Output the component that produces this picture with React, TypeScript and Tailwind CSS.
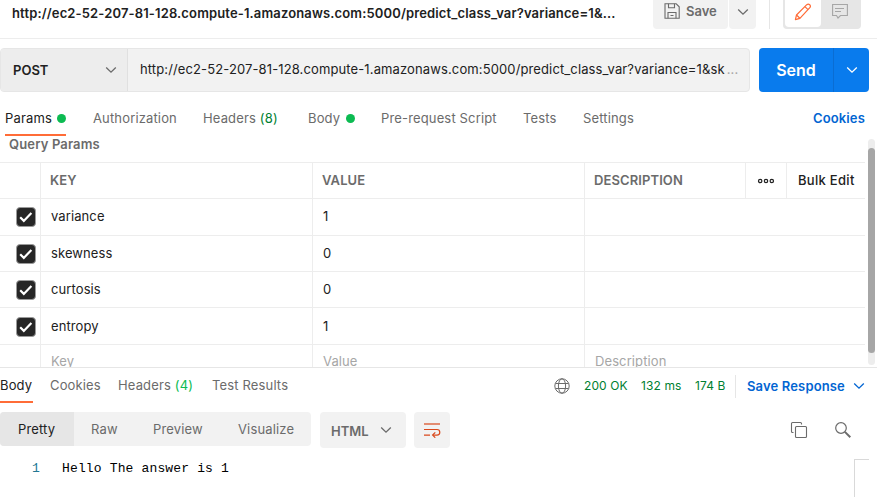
import React from 'react';

type IconProps = { className?: string };

const Chevron = ({ className = '' }: IconProps) => (
  <svg width="12" height="8" viewBox="0 0 12 8" fill="none" stroke="currentColor" strokeWidth="1.3" className={className}>
    <path d="M1.2 1.5 6 6.2l4.8-4.7" />
  </svg>
);

const SaveIcon = () => (
  <svg width="16" height="16" viewBox="0 0 16 16" fill="none" stroke="#6b6b6b" strokeWidth="1.1">
    <path d="M1 .8h11.2l3 3v11.400H1z" />
    <path d="M4.500.8v4h6v-4M4 15.200V9.500h8v5.700M6.500 12.500h3" />
  </svg>
);

const PencilIcon = () => (
  <svg width="18" height="18" viewBox="0 0 18 18" fill="none" stroke="#ff6c37" strokeWidth="1.2" strokeLinejoin="round">
    <path d="M1.4 16.600l1.100-4.600L12.800 1.700q1.500-1.200 2.900.1t.1 2.900L5.900 15.300z" />
    <path d="M10.900 3.600l3.100 3.100M2.500 12l3.400 3.300" />
  </svg>
);

const CommentIcon = () => (
  <svg width="16" height="16" viewBox="0 0 16 16" fill="none" stroke="#a6a6a6" strokeWidth="1.1">
    <path d="M.6 1.500h14.800v11H8.500L6 15l-1.500-2.500H.6z" />
    <path d="M3 5.500h9M3 8.500h6" />
  </svg>
);

const GlobeIcon = () => (
  <svg width="16" height="16" viewBox="0 0 16 16" fill="none" stroke="#6b6b6b" strokeWidth="1">
    <circle cx="8" cy="8" r="7.200" />
    <ellipse cx="8" cy="8" rx="3.600" ry="7.200" />
    <path d="M1.500 5.500h13M1.500 10.500h13" />
  </svg>
);

const WrapIcon = () => (
  <svg width="18" height="16" viewBox="0 0 18 16" fill="none" stroke="#d9481c" strokeWidth="1.2">
    <path d="M1 2h16" />
    <path d="M1 7.500h13a2.800 2.800 0 0 1 0 5.600H10M1 13.100h6" />
    <path d="M12.300 10.400 9.600 13.100l2.700 2.600" />
  </svg>
);

const CopyIcon = () => (
  <svg width="18" height="18" viewBox="0 0 18 18" fill="none" stroke="#6b6b6b" strokeWidth="1.1">
    <rect x="5.500" y="5.500" width="11" height="11" rx="1" />
    <path d="M3.500 11.500H2.500q-1 0-1-1v-8q0-1 1-1h8q1 0 1 1v1" />
  </svg>
);

const SearchIcon = () => (
  <svg width="18" height="18" viewBox="0 0 18 18" fill="none" stroke="#6b6b6b">
    <circle cx="7" cy="7" r="5.300" strokeWidth="1.200" />
    <path d="M10.900 10.900l5.400 5.400" strokeWidth="2" />
  </svg>
);

const Check = () => (
  <span className="flex size-[20px] items-center justify-center rounded-[4px] border border-[#9a9a9a] bg-[#262626]">
    <svg width="16" height="14" viewBox="0 0 16 14" fill="none" stroke="white" strokeWidth="2.200">
      <path d="M2.200 7.300l3.600 3.600 7.600-8" />
    </svg>
  </span>
);

const Dot = () => <span className="mt-[6px] block size-[9px] shrink-0 rounded-full bg-[#0cbb52]" />;

function Header() {
  return (
    <div className="flex h-[39px] items-start border-b border-[#ededed]">
      <div className="w-[653px] pl-[12px] pt-[3px] text-[13px] font-semibold leading-[20px] tracking-[0.14px] whitespace-nowrap text-[#212121]">
        http://ec2-52-207-81-128.compute-1.amazonaws.com:5000/predict_class_var?variance=1&amp;...
      </div>
      <div className="flex h-[29px] w-[75px] items-start gap-[6px] rounded-b-[4px] bg-[#f2f2f2] pl-[11px] pt-[3px]">
        <SaveIcon />
        <span className="text-[13px] font-semibold leading-[17px] text-[#6b6b6b]">Save</span>
      </div>
      <div className="ml-px flex h-[29px] w-[27px] justify-center rounded-b-[4px] bg-[#f2f2f2] pt-[8px] text-[#6b6b6b]">
        <Chevron />
      </div>
      <div className="ml-[13px] h-[29px] w-px bg-[#e6e6e6]" />
      <div className="ml-[13px] flex h-[29px] w-[78px] rounded-b-[4px] bg-[#e6e6e6] px-[2px] pb-[2px]">
        <div className="flex w-[36px] justify-center rounded-b-[4px] bg-white pt-[3px]"><PencilIcon /></div>
        <div className="flex w-[38px] justify-center pt-[3px]"><CommentIcon /></div>
      </div>
    </div>
  );
}

function RequestBar() {
  return (
    <div className="mt-[9px] flex h-[44px]">
      <div className="flex w-[750px] rounded-[4px] border border-[#e6e6e6] bg-[#f2f2f2]">
        <div className="flex w-[127px] shrink-0 items-center justify-between rounded-l-[3px] border-r border-[#e0e0e0] bg-[#ededed] pl-[12px] pr-[10px] text-[#6b6b6b]">
          <span className="pt-px text-[13px] font-semibold text-[#212121]">POST</span>
          <Chevron />
        </div>
        <div className="flex items-center pl-[12px] text-[13px] tracking-[0.12px] whitespace-nowrap text-[#212121]">
          http://ec2-52-207-81-128.compute-1.amazonaws.com:5000/predict_class_var?variance=1&amp;sk
          <span className="pl-[2px] text-[#a6a6a6]">...</span>
        </div>
      </div>
      <div className="ml-[9px] flex w-[110px] rounded-[4px] bg-[#097bed] text-white">
        <div className="flex w-[75px] items-center justify-center border-r border-[#0a6dd3] text-[16px] font-semibold">Send</div>
        <div className="flex flex-1 items-center justify-center"><Chevron /></div>
      </div>
    </div>
  );
}

function RequestTabs() {
  return (
    <div className="flex h-[44px] pl-[5px] pt-[16px] text-[13px] leading-[20px] tracking-[0.15px] whitespace-nowrap text-[#6b6b6b]">
      <div className="mr-[27px] flex h-[28px] w-[61px] items-start justify-between border-b-2 border-[#ff6c37] text-[#212121]">
        Params<Dot />
      </div>
      <div className="w-[110px]">Authorization</div>
      <div className="w-[105px]">Headers <span className="text-[#007f31]">(8)</span></div>
      <div className="mr-[26px] flex w-[47px] items-start justify-between">Body<Dot /></div>
      <div className="w-[142px]">Pre-request Script</div>
      <div className="w-[60px]">Tests</div>
      <div className="flex-1">Settings</div>
      <div className="pr-[12px] font-semibold text-[#0265d2]">Cookies</div>
    </div>
  );
}

const rows = [
  { name: 'variance', value: '1', size: 'h-[37px] leading-[35px]' },
  { name: 'skewness', value: '0', size: 'h-[36px] leading-[35px]' },
  { name: 'curtosis', value: '0', size: 'h-[36px] leading-[35px]' },
  { name: 'entropy', value: '1', size: 'h-[37px] leading-[37px]' },
];

function ParamsTable() {
  return (
    <div className="flex h-[231px] overflow-hidden">
      <div className="w-[865px]">
        <div className="h-[26px] pl-[9px] text-[13px] font-semibold leading-[17px] tracking-[0.15px] text-[#6b6b6b]">Query Params</div>
        <div className="grid h-[37px] grid-cols-[40px_272px_272px_161px_41px_79px] border-y border-[#ededed] text-[13px] font-semibold leading-[35px] tracking-[0.1px] text-[#6b6b6b] *:border-l *:border-[#ededed]">
          <div className="border-l-0!" />
          <div className="pl-[9px]">KEY</div>
          <div className="pl-[9px]">VALUE</div>
          <div className="pl-[9px]">DESCRIPTION</div>
          <div className="flex items-center justify-center">
            <svg width="18" height="6" viewBox="0 0 18 6" fill="none" stroke="#212121" strokeWidth="1.200">
              <circle cx="3.200" cy="3" r="1.700" /><circle cx="9" cy="3" r="1.700" /><circle cx="14.800" cy="3" r="1.700" />
            </svg>
          </div>
          <div className="pl-[11px] font-medium tracking-[0.300px] text-[#212121]">Bulk Edit</div>
        </div>
        {rows.map((row) => (
          <div
            key={row.name}
            className={`${row.size} grid grid-cols-[40px_272px_272px_281px] border-b border-[#ededed] text-[13px] tracking-[0.1px] text-[#212121] *:border-l *:border-[#ededed]`}
          >
            <div className="flex items-center border-l-0! pl-[16px]"><Check /></div>
            <div className="pl-[10px]">{row.name}</div>
            <div className="pl-[10px]">{row.value}</div>
            <div />
          </div>
        ))}
        <div className="grid h-[22px] grid-cols-[40px_272px_272px_281px] text-[13px] leading-[32px] tracking-[0.1px] text-[#a6a6a6] *:border-l *:border-[#ededed]">
          <div className="border-l-0!" />
          <div className="pl-[10px]">Key</div>
          <div className="pl-[10px]">Value</div>
          <div className="pl-[10px]">Description</div>
        </div>
      </div>
      <div className="ml-[3px] mt-[3px] h-[226px] w-[7px] rounded-full bg-[#ededed] pt-[9px]">
        <div className="h-[205px] rounded-full bg-[#a6a6a6]" />
      </div>
    </div>
  );
}

function ResponseTabs() {
  return (
    <div className="flex h-[45px] border-t border-[#e6e6e6] pt-[7px] text-[13px] leading-[20px] tracking-[0.15px] whitespace-nowrap text-[#6b6b6b]">
      <div className="mr-[17px] h-[28px] w-[33px] border-b-2 border-[#ff6c37] text-[#212121]">Body</div>
      <div className="w-[68px]">Cookies</div>
      <div className="w-[94px]">Headers <span className="text-[#0cbb52]">(4)</span></div>
      <div className="w-[342px]">Test Results</div>
      <div className="w-[30px] pt-[3px]"><GlobeIcon /></div>
      <div className="flex pt-px text-[12px] tracking-[0.1px] text-[#007f31]">
        <div className="w-[57px]">200 OK</div>
        <div className="w-[54px]">132 ms</div>
        <div className="w-[40px]">174 B</div>
      </div>
      <div className="h-[23px] w-px bg-[#e6e6e6]" />
      <div className="flex pl-[11px] text-[13px] font-semibold text-[#0265d2]">
        <span className="w-[106px] pt-px">Save Response</span>
        <Chevron className="mt-[7px]" />
      </div>
    </div>
  );
}

function ResponseToolbar() {
  return (
    <div className="flex h-[47px] items-start text-[13px] tracking-[0.15px] text-[#6b6b6b]">
      <div className="flex h-[34px] w-[311px] overflow-hidden rounded-[4px] bg-[#f2f2f2] leading-[35px]">
        <div className="w-[74px] bg-[#e6e6e6] pl-[18px] text-[#212121]">Pretty</div>
        <div className="w-[79px] pl-[17px]">Raw</div>
        <div className="w-[85px]">Preview</div>
        <div>Visualize</div>
      </div>
      <div className="ml-[9px] flex h-[36px] w-[86px] items-center justify-between rounded-[4px] bg-[#f2f2f2] pl-[11px] pr-[14px] font-semibold leading-[20px] tracking-normal">
        <span className="pt-px">HTML</span><Chevron />
      </div>
      <div className="ml-[8px] flex h-[36px] w-[36px] items-center justify-center rounded-[4px] bg-[#f2f2f2]"><WrapIcon /></div>
      <div className="ml-[340px] mt-[9px]"><CopyIcon /></div>
      <div className="ml-[26px] mt-[9px]"><SearchIcon /></div>
    </div>
  );
}

export default function App() {
  return (
    <div className="h-[497px] w-[877px] overflow-hidden bg-white font-['Inter',sans-serif]">
      <Header />
      <RequestBar />
      <RequestTabs />
      <ParamsTable />
      <ResponseTabs />
      <ResponseToolbar />
      <div className="flex h-[38px] font-['Liberation_Mono',monospace] text-[13px] leading-[20px] whitespace-pre">
        <div className="w-[62px] pl-[32px] text-[#237893]">1</div>
        <div className="w-[792px] tracking-[0.15px] text-black">Hello The answer is 1</div>
        <div className="w-[15px] border-l border-t border-[#d9d9d9]" />
      </div>
    </div>
  );
}
